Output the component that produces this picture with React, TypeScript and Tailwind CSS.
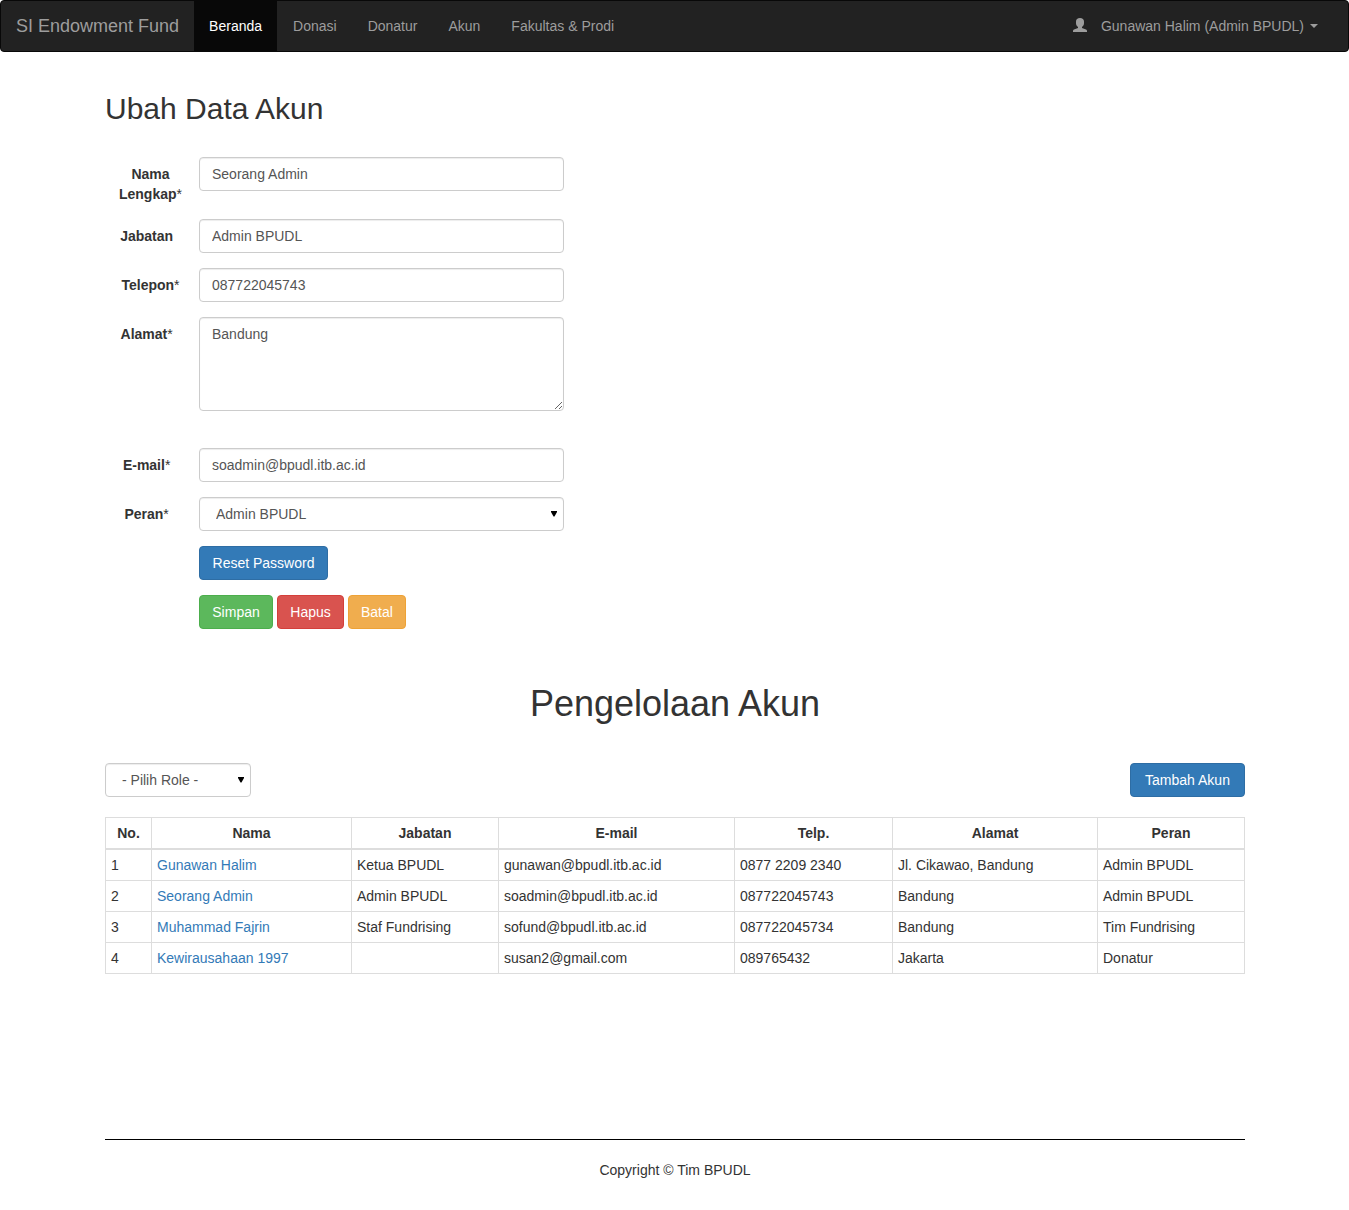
import type { ReactNode, SelectHTMLAttributes } from "react";

const NBSP = "\u00a0";

const control =
  "block w-full rounded-[4px] border border-[#ccc] bg-white px-3 text-sm/5 text-[#555] shadow-[inset_0_1px_1px_rgba(0,0,0,0.075)] outline-none focus:border-[#66afe9]";

const button = "h-[34px] rounded-[4px] border px-3 text-sm/5 text-white";
const primary = "border-[#2e6da4] bg-[#337ab7] hover:bg-[#286090]";

const navItems = ["Donasi", "Donatur", "Akun", "Fakultas & Prodi"];

const accounts = [
  ["Gunawan Halim", "Ketua BPUDL", "gunawan@bpudl.itb.ac.id", "0877 2209 2340", "Jl. Cikawao, Bandung", "Admin BPUDL"],
  ["Seorang Admin", "Admin BPUDL", "soadmin@bpudl.itb.ac.id", "087722045743", "Bandung", "Admin BPUDL"],
  ["Muhammad Fajrin", "Staf Fundrising", "sofund@bpudl.itb.ac.id", "087722045734", "Bandung", "Tim Fundrising"],
  ["Kewirausahaan 1997", "", "susan2@gmail.com", "089765432", "Jakarta", "Donatur"],
];

function Navbar() {
  return (
    <nav className="flex flex-wrap items-center rounded-[4px] border border-[#080808] bg-[#222] text-sm/5 text-[#9d9d9d]">
      <a href="#" className="px-[15px] py-[15px] text-lg/5 hover:text-white">
        SI Endowment Fund
      </a>
      <div className="flex flex-wrap gap-px">
        <a href="#" aria-current="page" className="bg-[#080808] px-[15px] py-[15px] text-white">
          Beranda
        </a>
        {navItems.map((item) => (
          <a key={item} href="#" className="px-[15px] py-[15px] hover:text-white">
            {item}
          </a>
        ))}
      </div>
      <button type="button" className="mr-[15px] ml-auto flex items-center px-[15px] py-[15px] hover:text-white">
        <svg className="mr-3.5 h-4 w-3.5" viewBox="0 0 14 16" fill="currentColor" aria-hidden="true">
          <path d="M7 0C4.500 0 3 1.300 3 3.600V5.200C3 6.800 3.900 8.200 5 9V10L1 11.600C.4 11.900 0 12.300 0 12.900V14H14V12.900C14 12.300 13.600 11.900 13 11.600L9 10V9C10.100 8.200 11 6.800 11 5.200V3.600C11 1.300 9.500 0 7 0Z" />
        </svg>
        Gunawan Halim (Admin BPUDL)
        <svg className="ml-1.5 h-1 w-2" viewBox="0 0 8 4" fill="currentColor" aria-hidden="true">
          <path d="M0 0H8L4 4Z" />
        </svg>
      </button>
    </nav>
  );
}

function Field({ id, label, required, pad = "", children }: { id: string; label: string; required?: boolean; pad?: string; children: ReactNode }) {
  return (
    <div className="flex">
      <label htmlFor={id} className="w-[94px] shrink-0 pt-[7px] pr-[15px] pl-3 text-center font-bold">
        {label}
        {required && <span className="font-normal">*</span>}
        {pad}
      </label>
      <div className="min-w-0 flex-1">{children}</div>
    </div>
  );
}

function Select(props: SelectHTMLAttributes<HTMLSelectElement>) {
  return (
    <div className="relative">
      <select {...props} className={`${control} h-[34px] appearance-none pl-4`} />
      <svg className="pointer-events-none absolute top-3.5 right-[7px] h-1.5 w-1.5" viewBox="0 0 6 6" fill="#000" aria-hidden="true">
        <path d="M0 0H6V1L3.500 5.500H2.500L0 1Z" />
      </svg>
    </div>
  );
}

function AccountForm() {
  return (
    <form className="flex max-w-[459px] flex-col gap-[15px]" onSubmit={(e) => e.preventDefault()}>
      <Field id="nama" label="Nama Lengkap" required>
        <input id="nama" type="text" defaultValue="Seorang Admin" className={`${control} h-[34px]`} />
      </Field>
      <Field id="jabatan" label="Jabatan" pad={NBSP + NBSP}>
        <input id="jabatan" type="text" defaultValue="Admin BPUDL" className={`${control} h-[34px]`} />
      </Field>
      <Field id="telepon" label="Telepon" required>
        <input id="telepon" type="tel" defaultValue="087722045743" className={`${control} h-[34px]`} />
      </Field>
      <Field id="alamat" label="Alamat" required pad={NBSP + NBSP}>
        <textarea id="alamat" defaultValue="Bandung" rows={4} className={`${control} mb-[22px] h-[94px] py-1.5`} />
      </Field>
      <Field id="email" label="E-mail" required pad={NBSP + NBSP}>
        <input id="email" type="email" defaultValue="soadmin@bpudl.itb.ac.id" className={`${control} h-[34px]`} />
      </Field>
      <Field id="peran" label="Peran" required pad={NBSP + NBSP}>
        <Select id="peran" defaultValue="Admin BPUDL">
          <option>Admin BPUDL</option>
          <option>Tim Fundrising</option>
          <option>Donatur</option>
        </Select>
      </Field>
      <div className="pl-[94px]">
        <button type="button" className={`${button} ${primary} min-w-[129px]`}>Reset Password</button>
      </div>
      <div className="flex gap-1 pl-[94px]">
        <button type="submit" className={`${button} min-w-[74px] border-[#4cae4c] bg-[#5cb85c]`}>Simpan</button>
        <button type="button" className={`${button} min-w-[67px] border-[#d43f3a] bg-[#d9534f]`}>Hapus</button>
        <button type="button" className={`${button} border-[#eea236] bg-[#f0ad4e]`}>Batal</button>
      </div>
    </form>
  );
}

function AccountTable() {
  return (
    <table className="w-full table-fixed border-collapse border border-[#ddd]">
      <colgroup>
        <col className="w-[46px]" />
        <col className="w-[200px]" />
        <col className="w-[147px]" />
        <col className="w-[236px]" />
        <col className="w-[158px]" />
        <col className="w-[205px]" />
        <col className="w-[147px]" />
      </colgroup>
      <thead>
        <tr>
          {["No.", "Nama", "Jabatan", "E-mail", "Telp.", "Alamat", "Peran"].map((head) => (
            <th key={head} scope="col" className="border border-b-2 border-[#ddd] p-[5px] text-center font-bold">
              {head}
            </th>
          ))}
        </tr>
      </thead>
      <tbody>
        {accounts.map(([name, ...rest], row) => (
          <tr key={name}>
            <td className="border border-[#ddd] p-[5px]">{row + 1}</td>
            <td className="border border-[#ddd] p-[5px]">
              <a href="#" className="text-[#337ab7] hover:underline">{name}</a>
            </td>
            {rest.map((value, i) => (
              <td key={i} className="border border-[#ddd] p-[5px]">{value}</td>
            ))}
          </tr>
        ))}
      </tbody>
    </table>
  );
}

export default function App() {
  return (
    <div className="min-h-screen bg-white font-['Liberation_Sans',Arial,sans-serif] text-sm/5 text-[#333]">
      <Navbar />
      <div className="mx-auto max-w-[1169px] pr-3.5 pb-[30px] pl-[15px]">
        <main>
          <h2 className="mt-10 mb-8 text-3xl/[33px] font-medium">Ubah Data Akun</h2>
          <AccountForm />
          <h1 className="mt-[55px] mb-[39px] text-center text-4xl/10 font-medium">Pengelolaan Akun</h1>
          <div className="mb-5 flex items-center justify-between">
            <div className="w-[146px]">
              <Select aria-label="Pilih Role" defaultValue="">
                <option value="">- Pilih Role -</option>
                <option>Admin BPUDL</option>
                <option>Tim Fundrising</option>
                <option>Donatur</option>
              </Select>
            </div>
            <button type="button" className={`${button} ${primary} min-w-[115px]`}>Tambah Akun</button>
          </div>
          <AccountTable />
        </main>
        <footer className="mt-[165px] border-t border-black pt-5 text-center">Copyright © Tim BPUDL</footer>
      </div>
    </div>
  );
}
